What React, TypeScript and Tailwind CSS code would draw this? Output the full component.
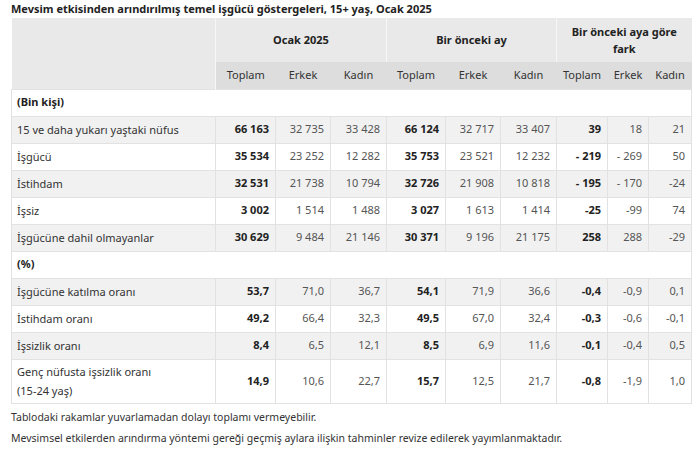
const font = { fontFamily: '"Noto Sans", "Open Sans", sans-serif' };

type Row = {
  label: string;
  values: string[];
  tall?: boolean;
};

const countRows: Row[] = [
  { label: "15 ve daha yukarı yaştaki nüfus", values: ["66 163", "32 735", "33 428", "66 124", "32 717", "33 407", "39", "18", "21"] },
  { label: "İşgücü", values: ["35 534", "23 252", "12 282", "35 753", "23 521", "12 232", "- 219", "- 269", "50"] },
  { label: "İstihdam", values: ["32 531", "21 738", "10 794", "32 726", "21 908", "10 818", "- 195", "- 170", "-24"] },
  { label: "İşsiz", values: ["3 002", "1 514", "1 488", "3 027", "1 613", "1 414", "-25", "-99", "74"] },
  { label: "İşgücüne dahil olmayanlar", values: ["30 629", "9 484", "21 146", "30 371", "9 196", "21 175", "258", "288", "-29"] },
];

const rateRows: Row[] = [
  { label: "İşgücüne katılma oranı", values: ["53,7", "71,0", "36,7", "54,1", "71,9", "36,6", "-0,4", "-0,9", "0,1"] },
  { label: "İstihdam oranı", values: ["49,2", "66,4", "32,3", "49,5", "67,0", "32,4", "-0,3", "-0,6", "-0,1"] },
  { label: "İşsizlik oranı", values: ["8,4", "6,5", "12,1", "8,5", "6,9", "11,6", "-0,1", "-0,4", "0,5"] },
  { label: "Genç nüfusta işsizlik oranı (15-24 yaş)", values: ["14,9", "10,6", "22,7", "15,7", "12,5", "21,7", "-0,8", "-1,9", "1,0"], tall: true },
];

const colWidths = [204, 60, 55, 56, 59, 55, 56, 51, 41, 43];
const subHeads = ["Toplam", "Erkek", "Kadın", "Toplam", "Erkek", "Kadın", "Toplam", "Erkek", "Kadın"];

function DataRow({ row, striped }: { row: Row; striped: boolean }) {
  return (
    <tr className={`${row.tall ? "h-[44px]" : "h-[27px]"} ${striped ? "bg-[#f1f1f1]" : "bg-white"}`}>
      <td className="border border-[#e2e2e2] pl-[5px] pr-1 leading-[19px] text-[#333]">
        {row.tall ? (
          <>
            Genç nüfusta işsizlik oranı
            <br />
            (15-24 yaş)
          </>
        ) : (
          row.label
        )}
      </td>
      {row.values.map((v, i) => (
        <td
          key={i}
          className={`border border-[#e2e2e2] pr-[6px] text-right ${
            i % 3 === 0 ? "font-bold text-[#222]" : "text-[#555]"
          }`}
        >
          {v}
        </td>
      ))}
    </tr>
  );
}

function SectionRow({ label }: { label: string }) {
  return (
    <tr className="h-[27px] bg-white">
      <td colSpan={10} className="border border-[#e2e2e2] pl-[5px] font-bold text-[#222]">
        {label}
      </td>
    </tr>
  );
}

export default function App() {
  return (
    <div className="w-[700px] h-[454px] bg-white pl-[11px] text-[11px]" style={font}>
      <h1 className="h-[18px] pt-[1px] text-[11px] leading-[16px] font-bold text-[#222]">
        Mevsim etkisinden arındırılmış temel işgücü göstergeleri, 15+ yaş, Ocak 2025
      </h1>
      <table className="table-fixed border-collapse w-[680px]">
        <colgroup>
          {colWidths.map((w, i) => (
            <col key={i} style={{ width: w }} />
          ))}
        </colgroup>
        <thead>
          <tr className="h-[44px] bg-[#e9e9e9]">
            <th rowSpan={2} className="border-r border-[#f6f6f6]" />
            <th colSpan={3} className="border-r border-[#f6f6f6] font-bold text-[#222] text-center">
              Ocak 2025
            </th>
            <th colSpan={3} className="border-r border-[#f6f6f6] font-bold text-[#222] text-center">
              Bir önceki ay
            </th>
            <th colSpan={3} className="font-bold text-[#222] text-center leading-[17px] px-2">
              Bir önceki aya göre fark
            </th>
          </tr>
          <tr className="h-[27px] bg-[#dddddd]">
            {subHeads.map((h, i) => (
              <th key={i} className="font-normal text-[#333] text-center">
                {h}
              </th>
            ))}
          </tr>
        </thead>
        <tbody>
          <SectionRow label="(Bin kişi)" />
          {countRows.map((r, i) => (
            <DataRow key={r.label} row={r} striped={i % 2 === 0} />
          ))}
          <SectionRow label="(%)" />
          {rateRows.map((r, i) => (
            <DataRow key={r.label} row={r} striped={i % 2 === 0} />
          ))}
        </tbody>
      </table>
      <p className="mt-[3px] text-[10.5px] leading-[21px] text-[#333]">
        Tablodaki rakamlar yuvarlamadan dolayı toplamı vermeyebilir.
      </p>
      <p className="text-[10.5px] leading-[21px] text-[#333]">
        Mevsimsel etkilerden arındırma yöntemi gereği geçmiş aylara ilişkin tahminler revize edilerek yayımlanmaktadır.
      </p>
    </div>
  );
}
